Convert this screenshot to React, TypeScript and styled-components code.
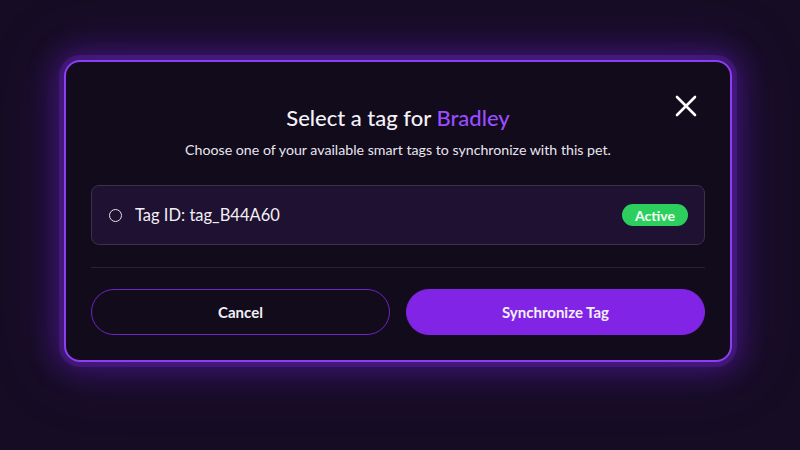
import styled, { createGlobalStyle } from "styled-components";

const GlobalStyle = createGlobalStyle`
  html, body {
    margin: 0;
    padding: 0;
    background: #160d24;
    font-family: "Lato", "Noto Sans", sans-serif;
  }
`;

const Backdrop = styled.div`
  width: 800px;
  height: 450px;
  display: flex;
  justify-content: center;
  align-items: flex-start;
  padding: 60px 4px 0 0;
  box-sizing: border-box;
  background: #160d24;
`;

const Modal = styled.div`
  position: relative;
  width: 668px;
  box-sizing: border-box;
  padding: 24px 25px 25px;
  background: #110b1b;
  border: 2px solid #8a3ff0;
  border-radius: 16px;
  box-shadow: 0 0 0 5px rgba(110, 40, 200, 0.28), 0 0 26px 10px rgba(100, 30, 190, 0.42),
    0 0 60px 12px rgba(80, 20, 150, 0.25);
  display: flex;
  flex-direction: column;
`;

const CloseButton = styled.button`
  position: absolute;
  top: 30px;
  right: 30px;
  width: 28px;
  height: 28px;
  padding: 0;
  border: none;
  background: transparent;
  display: flex;
  align-items: center;
  justify-content: center;
  cursor: pointer;
`;

const Title = styled.h2`
  margin: 18px 0 0;
  text-align: center;
  font-size: 22px;
  line-height: 28px;
  font-weight: 500;
  color: #f4f1f8;
`;

const Highlight = styled.span`
  color: #9b4dff;
`;

const Subtitle = styled.p`
  margin: 8px 0 0;
  text-align: center;
  font-size: 14.2px;
  line-height: 20px;
  color: #e9e5ef;
`;

const TagRow = styled.label`
  margin-top: 25px;
  height: 60px;
  box-sizing: border-box;
  display: flex;
  align-items: center;
  gap: 13px;
  padding: 0 16px 0 17px;
  background: #1f1131;
  border: 1px solid #3b3148;
  border-radius: 8px;
  cursor: pointer;
`;

const Radio = styled.span`
  width: 11px;
  height: 11px;
  border: 1.5px solid #e4e0ea;
  border-radius: 50%;
`;

const TagText = styled.span`
  flex: 1;
  font-size: 16.5px;
  color: #f2eff6;
`;

const Badge = styled.span`
  height: 22px;
  padding: 0 13px;
  display: flex;
  align-items: center;
  border-radius: 11px;
  background: #2ccf5d;
  color: #f4fff6;
  font-size: 14px;
  font-weight: 700;
`;

const Divider = styled.hr`
  margin: 22px 0 0;
  border: none;
  height: 1px;
  background: #2a2236;
`;

const Actions = styled.div`
  margin-top: 21px;
  display: grid;
  grid-template-columns: 1fr 1fr;
  gap: 16px;
`;

const Button = styled.button<{ $primary?: boolean }>`
  height: 46px;
  border-radius: 23px;
  font-family: inherit;
  font-size: 15px;
  font-weight: 700;
  color: #f3f0f7;
  cursor: pointer;
  background: ${(p) => (p.$primary ? "#8224e6" : "transparent")};
  border: 1px solid ${(p) => (p.$primary ? "#8224e6" : "#6b26c4")};
`;

function App() {
  return (
    <>
      <GlobalStyle />
      <Backdrop>
        <Modal>
          <CloseButton aria-label="Close">
            <svg width="22" height="22" viewBox="0 0 22 22">
              <path d="M2 2 L20 20 M20 2 L2 20" stroke="#ffffff" strokeWidth="2.6" strokeLinecap="round" />
            </svg>
          </CloseButton>
          <Title>
            Select a tag for <Highlight>Bradley</Highlight>
          </Title>
          <Subtitle>Choose one of your available smart tags to synchronize with this pet.</Subtitle>
          <TagRow>
            <Radio />
            <TagText>Tag ID: tag_B44A60</TagText>
            <Badge>Active</Badge>
          </TagRow>
          <Divider />
          <Actions>
            <Button>Cancel</Button>
            <Button $primary>Synchronize Tag</Button>
          </Actions>
        </Modal>
      </Backdrop>
    </>
  );
}

export default App;
